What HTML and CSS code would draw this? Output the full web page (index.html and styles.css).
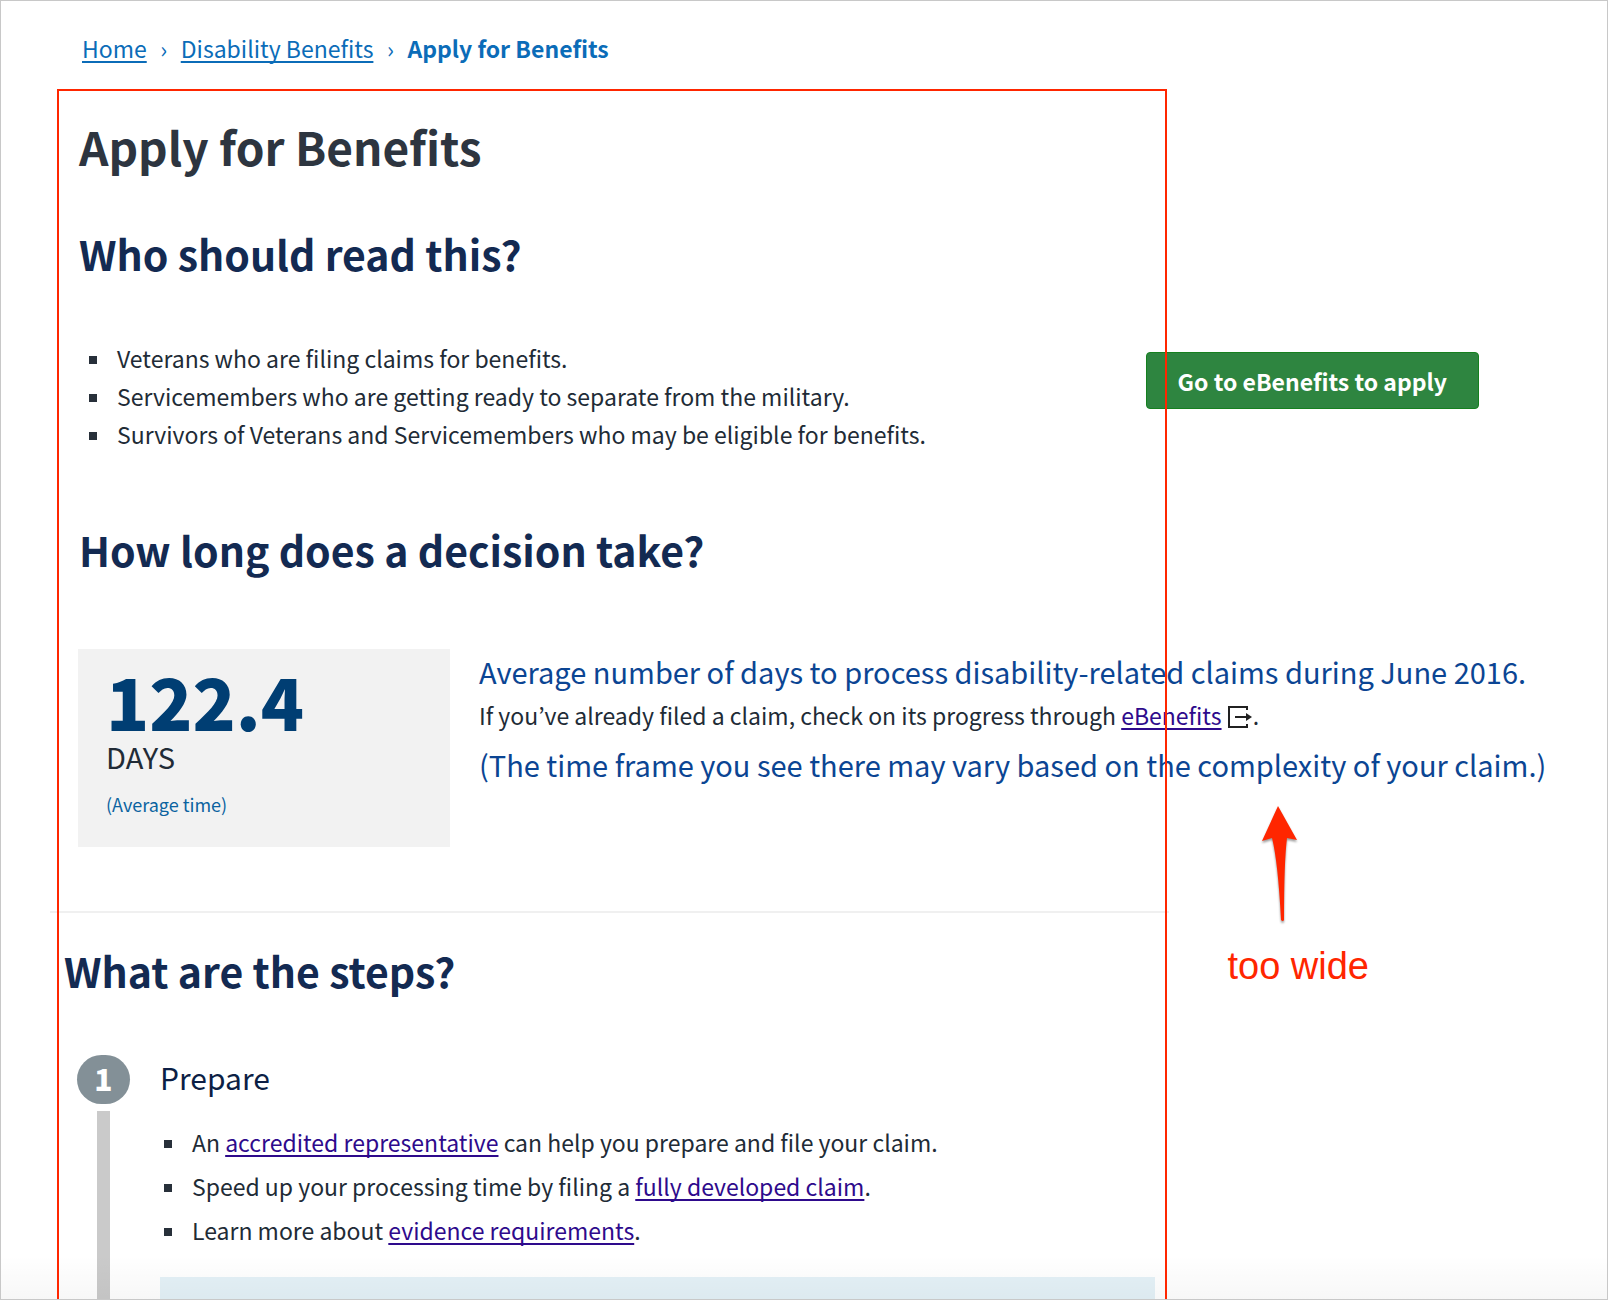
FILE: index.html
```html
<!DOCTYPE html>
<html lang="en">
<head>
<meta charset="utf-8">
<meta name="viewport" content="width=device-width, initial-scale=1">
<title>Apply for Benefits</title>
<link rel="stylesheet" href="styles.css">
</head>
<body>
<div class="page">
  <nav class="breadcrumb" aria-label="Breadcrumb">
    <a href="#">Home</a>
    <span class="separator">›</span>
    <a href="#">Disability Benefits</a>
    <span class="separator">›</span>
    <strong>Apply for Benefits</strong>
  </nav>

  <main class="main">
    <section class="intro">
      <h1>Apply for Benefits</h1>
      <h2>Who should read this?</h2>
      <div class="audience">
        <ul class="list">
          <li>Veterans who are filing claims for benefits.</li>
          <li>Servicemembers who are getting ready to separate from the military.</li>
          <li>Survivors of Veterans and Servicemembers who may be eligible for benefits.</li>
        </ul>
        <button class="apply" type="button">Go to eBenefits to apply</button>
      </div>
      <h2>How long does a decision take?</h2>
      <div class="timing">
        <div class="card">
          <p class="number">122.4</p>
          <p class="unit">DAYS</p>
          <p class="note">(Average time)</p>
        </div>
        <div class="details">
          <p class="lead">Average number of days to process disability-related claims during June 2016.</p>
          <p class="progress">If you’ve already filed a claim, check on its progress through <a class="visited" href="#">eBenefits</a>
            <svg class="exit" width="26" height="24" viewBox="0 0 26 24" aria-hidden="true"><path d="M20 5V2H2v20h18v-3" fill="none" stroke="#212121" stroke-width="2"/><path d="M8 11h11V8l6 4-6 4v-3H8z" fill="#212121"/></svg>.</p>
          <p class="lead">(The time frame you see there may vary based on the complexity of your claim.)</p>
        </div>
      </div>
    </section>

    <hr class="divider">

    <section class="steps">
      <h2>What are the steps?</h2>
      <div class="step">
        <div class="rail">
          <span class="badge">1</span>
          <span class="track"></span>
        </div>
        <div class="step-body">
          <h3>Prepare</h3>
          <ul class="list list-loose">
            <li>An <a class="visited" href="#">accredited representative</a> can help you prepare and file your claim.</li>
            <li>Speed up your processing time by filing a <a class="visited" href="#">fully developed claim</a>.</li>
            <li>Learn more about <a class="visited" href="#">evidence requirements</a>.</li>
          </ul>
          <div class="callout"></div>
        </div>
      </div>
    </section>
  </main>

  <div class="fade"></div>
  <div class="outline"></div>
  <div class="remark">
    <svg width="44" height="124" viewBox="0 0 44 124" aria-hidden="true"><path d="M20 4 39 38 29 36Q26 60 26 118 25 120 23 118 20 60 14 36L4 39Z" fill="#ff2600"/></svg>
    <span>too wide</span>
  </div>
</div>
</body>
</html>
```
FILE: styles.css
```css
* { box-sizing: border-box; }

body {
  margin: 0;
  background: #fff;
  color: #212b36;
  font-family: "Noto Sans CJK KR", "Noto Sans", sans-serif;
  font-size: 23px;
}

h1, h2, h3, p, ul { margin: 0; padding: 0; }

.page {
  position: relative;
  display: flex;
  flex-direction: column;
  min-height: 100vh;
  border: 1px solid #c8c8c8;
  overflow: hidden;
}

.breadcrumb {
  display: flex;
  padding: 31px 81px 0;
  color: #0b6cb8;
  line-height: 32px;
}
.breadcrumb a { color: inherit; }
.separator { width: 34px; text-align: center; }

a {
  text-decoration-thickness: 2px;
  text-underline-offset: 3px;
  text-decoration-skip-ink: none;
}
.visited { color: #2e0a8c; }

.main {
  display: flex;
  flex: 1;
  flex-direction: column;
  padding-top: 54px;
}

.intro { padding-left: 78px; }

h1 {
  color: #2d3540;
  font-size: 46px;
  line-height: 56px;
  margin-bottom: 53px;
}
h2 {
  color: #132a52;
  font-size: 41px;
  line-height: 52px;
}
h3 {
  color: #0c1f45;
  font-size: 30px;
  font-weight: 400;
  line-height: 40px;
}

.audience {
  display: flex;
  align-items: center;
  justify-content: space-between;
  margin: 60px 128px 70px 0;
}

.list {
  list-style: none;
  line-height: 38px;
}
.list li {
  display: flex;
  align-items: center;
  padding-left: 10px;
  white-space: pre-wrap;
}
.list li::before {
  content: "";
  flex: none;
  width: 8px;
  height: 8px;
  margin-top: 4px;
  margin-right: 20px;
  background: #28303a;
}

.apply {
  align-self: flex-start;
  height: 57px;
  margin-top: 13px;
  padding: 0 31px;
  border: 1px solid #15801f;
  border-radius: 4px;
  background: #2e8540;
  color: #fff;
  font: 700 23px "Noto Sans CJK KR", "Noto Sans", sans-serif;
}

.timing {
  display: flex;
  gap: 29px;
  margin-top: 74px;
  margin-left: -1px;
}
.card {
  flex: none;
  width: 372px;
  padding: 15px 28px 29px;
  background: #f2f2f2;
}
.number {
  color: #003e73;
  font-size: 71px;
  font-weight: 900;
  line-height: 72px;
}
.unit {
  font-size: 29px;
  line-height: 40px;
}
.note {
  margin-top: 14px;
  color: #0b63a0;
  font-size: 18px;
  line-height: 28px;
}
.details {
  padding-top: 2px;
  white-space: nowrap;
}
.lead {
  color: #0b4593;
  font-size: 29px;
  line-height: 40px;
}
.progress {
  margin: 4px 0 9px;
  line-height: 40px;
}
.exit { vertical-align: -4px; }

.divider {
  width: auto;
  height: 2px;
  margin: 64px 438px 31px 49px;
  border: 0;
  background: #f0f0f0;
}

.steps {
  display: flex;
  flex: 1;
  flex-direction: column;
  margin-right: 452px;
  padding-left: 63px;
}
.step {
  display: flex;
  flex: 1;
  gap: 30px;
  margin-top: 59px;
  padding-left: 13px;
}
.rail {
  display: flex;
  flex-direction: column;
  align-items: center;
  gap: 7px;
}
.badge {
  width: 53px;
  height: 49px;
  border-radius: 25px;
  background: #839097;
  color: #fff;
  font-size: 30px;
  font-weight: 900;
  line-height: 47px;
  text-align: center;
}
.track {
  flex: 1;
  width: 13px;
  background: #cacaca;
}
.step-body {
  display: flex;
  flex: 1;
  flex-direction: column;
  padding-top: 2px;
}
.list-loose {
  margin-top: 23px;
  line-height: 44px;
}
.list-loose li { padding-left: 4px; }
.callout {
  flex: 1;
  min-height: 20px;
  margin-top: 25px;
  background: #e4f1f7;
}

/* Review mark-up, drawn over the content */
.fade {
  position: absolute;
  inset: auto 0 0;
  height: 44px;
  background: linear-gradient(rgba(0, 0, 0, 0), rgba(0, 0, 0, .03));
}
.outline {
  position: absolute;
  inset: 88px 440px 0 56px;
  border: 2px solid #ff2600;
  border-bottom: 0;
  pointer-events: none;
}
.remark {
  position: absolute;
  top: 801px;
  right: 238px;
  display: flex;
  flex-direction: column;
  color: #ff2600;
  font: 38px/44px "Liberation Sans", Arial, sans-serif;
}
.remark svg {
  margin-left: 31px;
  margin-bottom: 18px;
  filter: drop-shadow(0 2px 1px rgba(0, 0, 0, .4));
}
```
